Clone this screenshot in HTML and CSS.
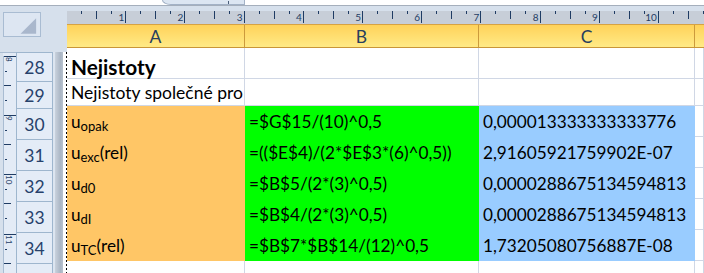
FILE: index.html
```html
<!DOCTYPE html>
<html>
<head>
<meta charset="utf-8">
<link rel="stylesheet" href="styles.css">
</head>
<body>
<div class="top"><div class="pill"><span class="pill-mark"></span></div></div>
<div class="main">
  <div class="left">
    <div class="corner-wrap"><div class="corner"><svg width="37" height="24" viewBox="0 0 37 24"><polygon points="17,21 33,21 33,5" fill="#A9B7CC"/></svg></div></div>
    <div class="lrows">
      <div class="vruler">
        <div class="vcm"><span class="vlab">8</span></div>
        <div class="vcm"><span class="vlab">9</span></div>
        <div class="vcm"><span class="vlab">10</span></div>
        <div class="vcm"><span class="vlab">11</span></div>
      </div>
      <div class="rh">
        <div class="rhc r28 first">28</div>
        <div class="rhc r29">29</div>
        <div class="rhc r30">30</div>
        <div class="rhc r30">31</div>
        <div class="rhc r30">32</div>
        <div class="rhc r30">33</div>
        <div class="rhc r30">34</div>
        <div class="rhc r35">35</div>
      </div>
      <div class="gap"></div>
      <div class="strip"></div>
      <div class="wgap"></div>
      <div class="dash"></div>
    </div>
  </div>
  <div class="right">
    <div class="ruler-wrap">
      <div class="ruler">
        <div class="cm"><span class="lab">1</span></div>
        <div class="cm"><span class="lab">2</span></div>
        <div class="cm"><span class="lab">3</span></div>
        <div class="cm"><span class="lab">4</span></div>
        <div class="cm"><span class="lab">5</span></div>
        <div class="cm"><span class="lab">6</span></div>
        <div class="cm"><span class="lab">7</span></div>
        <div class="cm"><span class="lab">8</span></div>
        <div class="cm"><span class="lab">9</span></div>
        <div class="cm"><span class="lab">10</span></div>
        <div class="cm"></div>
      </div>
    </div>
    <div class="colhdr">
      <div class="ch">A</div>
      <div class="ch">B</div>
      <div class="ch">C</div>
      <div class="ch last"></div>
    </div>
    <div class="grid">
      <div class="c r28 head">Nejistoty</div>
      <div class="c r28"></div>
      <div class="c r28"></div>
      <div class="c r28"></div>

      <div class="c r29 txt">Nejistoty společné pro</div>
      <div class="c r29"></div>
      <div class="c r29"></div>
      <div class="c r29"></div>

      <div class="c r30 orange"><span>u<sub>opak</sub></span></div>
      <div class="c r30 green">=$G$15/(10)^0,5</div>
      <div class="c r30 blue">0,000013333333333776</div>
      <div class="c r30"></div>

      <div class="c r30 orange"><span>u<sub>exc</sub>(rel)</span></div>
      <div class="c r30 green">=(($E$4)/(2*$E$3*(6)^0,5))</div>
      <div class="c r30 blue">2,91605921759902E-07</div>
      <div class="c r30"></div>

      <div class="c r30 orange"><span>u<sub>d0</sub></span></div>
      <div class="c r30 green">=$B$5/(2*(3)^0,5)</div>
      <div class="c r30 blue">0,0000288675134594813</div>
      <div class="c r30"></div>

      <div class="c r30 orange"><span>u<sub>dI</sub></span></div>
      <div class="c r30 green">=$B$4/(2*(3)^0,5)</div>
      <div class="c r30 blue">0,0000288675134594813</div>
      <div class="c r30"></div>

      <div class="c r30 orange"><span>u<sub>TC</sub>(rel)</span></div>
      <div class="c r30 green">=$B$7*$B$14/(12)^0,5</div>
      <div class="c r30 blue">1,73205080756887E-08</div>
      <div class="c r30"></div>

      <div class="c r35"></div>
      <div class="c r35"></div>
      <div class="c r35"></div>
      <div class="c r35"></div>
    </div>
  </div>
</div>
</body>
</html>
```
FILE: styles.css
```css
* { box-sizing: border-box; }
html, body { margin: 0; padding: 0; }
body {
  width: 704px;
  height: 273px;
  overflow: hidden;
  background: #D6E0EC;
  font-family: Lato, "Open Sans", sans-serif;
}

/* top strip */
.top {
  height: 6px;
  background: #fff;
  border-bottom: 1px solid #A5AFBC;
  display: flex;
  padding-left: 162px;
}
.pill {
  width: 83px;
  height: 5px;
  background: #DCE6F2;
  border: 1px solid #A3B2C6;
  border-top: none;
  border-bottom-left-radius: 14px 8px;
  display: flex;
  justify-content: flex-end;
  padding-right: 15px;
}
.pill-mark {
  width: 1px;
  height: 3px;
  margin-top: 1px;
  background: #4A5E7A;
}

.main {
  display: flex;
  height: 267px;
}

/* left panel */
.left {
  width: 67px;
  flex-shrink: 0;
  display: flex;
  flex-direction: column;
}
.corner-wrap {
  height: 45px;
  padding: 6px 0 0 3px;
}
.corner {
  width: 38px;
  height: 25px;
  background: #DDE6F2;
  border: 1px solid #A9BCD2;
  display: flex;
}
.lrows {
  flex: 1;
  display: flex;
  padding-top: 1px;
  overflow: hidden;
}
.vruler {
  width: 16px;
  padding-left: 3px;
  flex-shrink: 0;
  display: flex;
  flex-direction: column;
  background: linear-gradient(#D6E0EC, #D6E0EC) 0 0 / 3px 100% no-repeat, #E3EBF6;
  border-top: 1px solid #A9BCD2;
  padding-top: 3px;
}
.vcm {
  height: 59.2px;
  flex-shrink: 0;
  position: relative;
  border-left: 1px solid #A9BCD2;
  background:
    linear-gradient(#1F3C64, #1F3C64) 0 0 / 12px 1px no-repeat,
    linear-gradient(#1F3C64, #1F3C64) 1px 15px / 2px 1px no-repeat,
    linear-gradient(#1F3C64, #1F3C64) 0 29px / 7px 1px no-repeat,
    linear-gradient(#1F3C64, #1F3C64) 1px 44px / 2px 1px no-repeat;
}
.vlab {
  position: absolute;
  left: 1px;
  top: 1px;
  writing-mode: vertical-rl;
  font-size: 8px;
  line-height: 8px;
  color: #1F3C64;
}
.rh {
  width: 37px;
  flex-shrink: 0;
  display: flex;
  flex-direction: column;
}
.rhc {
  background: #E4ECF7;
  border: 1px solid #9EB6CE;
  border-top: none;
  color: #27416B;
  font-size: 17.5px;
  display: flex;
  align-items: flex-end;
  justify-content: center;
  line-height: 20px;
  flex-shrink: 0;
}
.rhc.first { border-top: 1px solid #9EB6CE; }
.rh .r28 { height: 30px; padding-bottom: 3px; }
.rh .r29 { height: 27px; padding-bottom: 2px; }
.rh .r30 { height: 31px; padding-bottom: 4px; }
.rh .r35 { height: 31px; }
.gap { width: 2px; background: #DCE5F0; flex-shrink: 0; }
.strip {
  width: 8px;
  flex-shrink: 0;
  background: linear-gradient(to right, #C9D2DD, #A9B5C4 70%, #B8C2CE);
}
.wgap { width: 3px; background: #fff; flex-shrink: 0; }
.dash {
  width: 1px;
  flex-shrink: 0;
  background: repeating-linear-gradient(#000 0 2px, #fff 2px 4px);
}

/* right panel */
.right {
  flex: 1;
  display: flex;
  flex-direction: column;
  overflow: hidden;
}
.ruler-wrap {
  height: 18px;
  padding-top: 5px;
}
.ruler {
  height: 13px;
  background: #C7CED8;
  display: flex;
  overflow: hidden;
}
.cm {
  width: 59.2px;
  flex-shrink: 0;
  height: 12px;
  border-right: 1px solid #1F3C64;
  display: flex;
  justify-content: flex-end;
  align-items: flex-end;
  padding-right: 1px;
  background:
    linear-gradient(#1F3C64, #1F3C64) 14px 0 / 1px 3px no-repeat,
    linear-gradient(#1F3C64, #1F3C64) 29px 0 / 1px 8px no-repeat,
    linear-gradient(#1F3C64, #1F3C64) 44px 0 / 1px 3px no-repeat;
}
.lab {
  font-size: 10px;
  line-height: 10px;
  color: #1F3C64;
  margin-bottom: 1px;
}

.colhdr {
  height: 26px;
  display: grid;
  grid-template-columns: 178px 234px 216px 1fr;
  background: linear-gradient(#FFD25A, #FFEA86);
  border-top: 1px solid #D6A244;
  border-bottom: 1px solid #C99638;
}
.ch {
  border-right: 1px solid #CC9A3C;
  display: flex;
  align-items: center;
  justify-content: center;
  font-size: 17.5px;
  color: #283F5E;
  padding-top: 1px;
}
.ch.last { border-right: none; }

.grid {
  display: grid;
  grid-template-columns: 178px 234px 216px 1fr;
}
.c {
  border-right: 1px solid #D0D7E5;
  border-bottom: 1px solid #D0D7E5;
  background: #fff;
  font-size: 17.2px;
  line-height: 20px;
  display: flex;
  align-items: flex-end;
  padding-left: 4px;
  white-space: nowrap;
  color: #000;
}
.grid .r28 { height: 31px; padding-bottom: 0; }
.grid .r29 { height: 27px; padding-bottom: 2px; }
.grid .r30 { height: 31px; padding-bottom: 4px; }
.grid .r35 { height: 20px; }
.txt { font-size: 17.5px; }
.head {
  font-weight: bold;
  font-size: 20.8px;
  line-height: 23px;
}
.orange { background: #FFC666; border-color: transparent; }
.green { background: #00FF00; border-color: transparent; }
.blue { background: #99CCFF; border-color: transparent; }
.orange span { line-height: 20px; }
sub {
  font-size: 13px;
  line-height: 0;
  vertical-align: -3px;
}
```
